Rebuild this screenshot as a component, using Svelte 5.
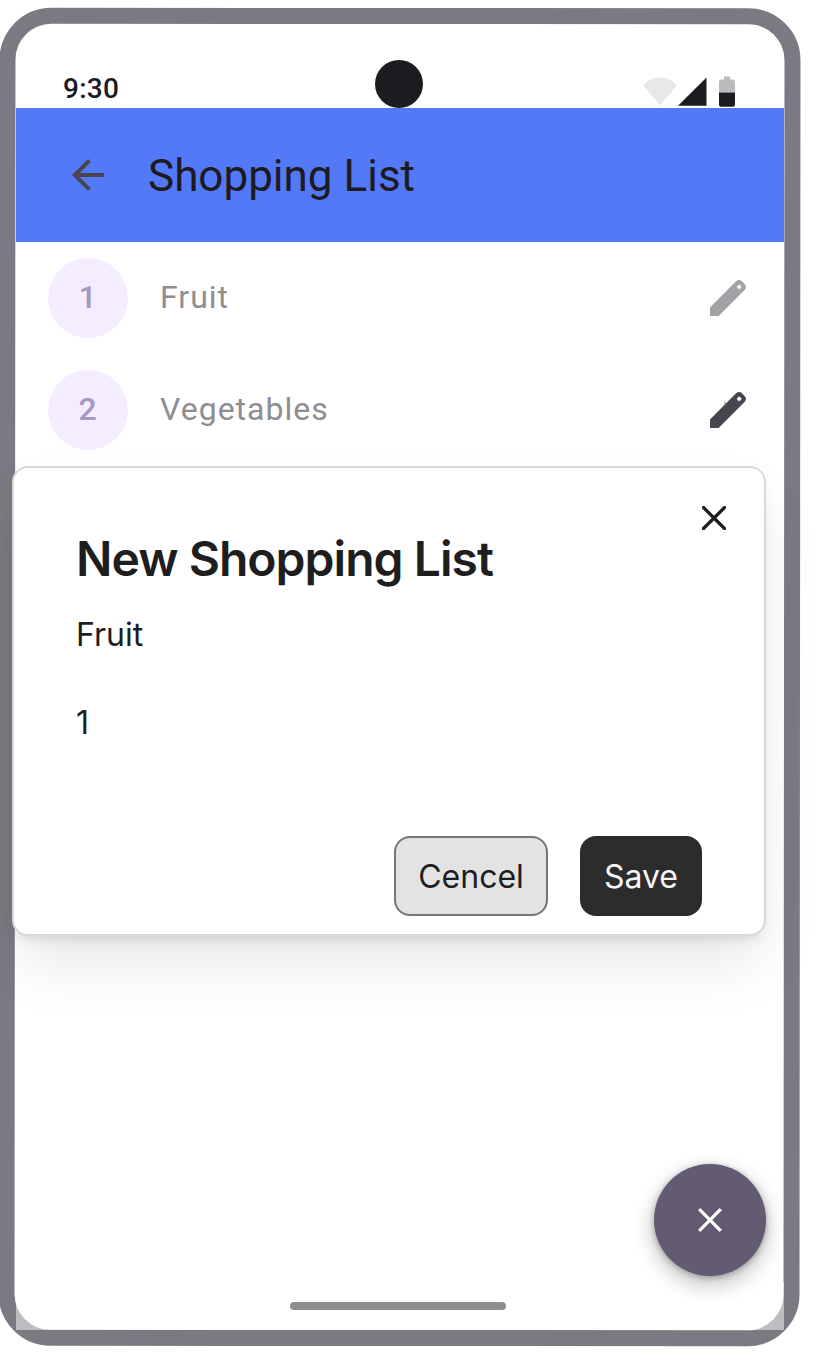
<script>
  const items = [
    { n: 1, label: 'Fruit', active: false },
    { n: 2, label: 'Vegetables', active: true }
  ];
</script>

<div class="phone">
  <div class="bezel"></div>
  <div class="screen">
    <header class="status">
      <span class="time">9:30</span>
      <span class="camera"></span>
      <svg class="signals" width="94" height="32" viewBox="0 0 94 32">
        <path d="M17 29.5 0.3 9.2Q7 1.5 17 1.5T34 9.2Z" fill="#e8e8e8" />
        <path d="M35 29.8 63.5 1.5V29.8Z" fill="#1d1b20" />
        <path d="M76 16.5V6Q76 3.5 78.5 3.5H81V.5H87V3.5H90Q92 3.5 92 6V16.5Z" fill="#bbbabc" />
        <path d="M76 16.5H92V28.5Q92 30.7 90 30.7H78Q76 30.7 76 28.5Z" fill="#1d1b20" />
      </svg>
    </header>

    <nav class="appbar">
      <svg width="32" height="32" viewBox="0 0 32 32">
        <path d="M32 14v4H7.65l11.2 11.2L16 32 0 16 16 0l2.85 2.8L7.65 14Z" fill="#49454f" />
      </svg>
      <h1>Shopping List</h1>
    </nav>

    <ul>
      {#each items as item}
        <li>
          <span class="avatar">{item.n}</span>
          <span class="label">{item.label}</span>
          <svg class:faded={!item.active} width="48" height="48" viewBox="0 0 24 24">
            <path fill="#49454f" fill-rule="evenodd" d="M3 21V16.7L16.15 3.55Q17.5 2.45 18.85 3.55L20.4 5.1Q21.6 6.45 20.4 7.85L7.3 21ZM17.6 5.2 16.9 5.7 16.4 6.4 16.9 7.1 17.6 7.6 18.3 7.1 18.8 6.4 18.3 5.7Z" />
            {#if item.active}
              <path d="M10.2 7.4 11.1 8.6 10.2 9.6Z" fill="#a19fa5" />
            {/if}
          </svg>
        </li>
      {/each}
    </ul>

    <section class="dialog">
      <svg class="close" width="24" height="24" viewBox="0 0 24 24">
        <path d="M1.5 1.5 22.5 22.5M22.5 1.5 1.5 22.5" stroke="#1e1e1e" stroke-width="3.2" stroke-linecap="round" />
      </svg>
      <h2>New Shopping List</h2>
      <p>Fruit</p>
      <p class="amount">1</p>
      <div class="actions">
        <button class="cancel">Cencel</button>
        <button class="save">Save</button>
      </div>
    </section>

    <button class="fab" aria-label="Close">
      <svg width="24" height="24" viewBox="0 0 24 24">
        <path d="M1.2 1.2 22.8 22.8M22.8 1.2 1.2 22.8" stroke="#fff" stroke-width="3.2" />
      </svg>
    </button>

    <footer><span></span></footer>
  </div>
</div>

<style>
  :global(body) { margin: 0; background: #fff; }
  * { box-sizing: border-box; }
  .phone {
    position: relative;
    width: 820px;
    height: 1368px;
    padding: 24px 36px 38px 16px;
    overflow: hidden;
    background: #fff;
    font-family: Roboto, sans-serif;
  }
  .bezel {
    position: absolute;
    left: -1px;
    top: 8.4px;
    width: 801px;
    height: 1338px;
    border: 16px solid #7d7983;
    border-radius: 52px;
    transform: rotate(0.045deg);
  }
  .screen {
    position: relative;
    display: flex;
    flex-direction: column;
    height: 1306px;
  }
  .status {
    display: grid;
    grid-template-columns: 1fr 48px 1fr;
    align-items: end;
    height: 84px;
    flex: none;
    padding: 0 47px;
  }
  .time {
    font-size: 28px;
    line-height: 38px;
    font-weight: 500;
    letter-spacing: 0.28px;
    color: #1d1b20;
  }
  .camera {
    width: 48px;
    height: 48px;
    border-radius: 50%;
    background: #1d1b20;
    margin-left: -1px;
  }
  .signals { justify-self: end; }
  .appbar {
    height: 134px;
    flex: none;
    display: flex;
    align-items: center;
    gap: 44px;
    padding-left: 56px;
    background: #5378f8;
  }
  h1 {
    margin: 0;
    padding-top: 2px;
    font-size: 44px;
    line-height: 56px;
    font-weight: 400;
    color: #1d1b20;
  }
  ul { margin: 0; padding: 0; list-style: none; }
  li {
    height: 112px;
    display: flex;
    align-items: center;
    gap: 32px;
    padding: 0 32px;
  }
  .avatar {
    width: 80px;
    height: 80px;
    border-radius: 50%;
    background: #f4edff;
    color: #a498c5;
    font-size: 32px;
    font-weight: 500;
    line-height: 79px;
    text-align: center;
    padding-right: 1px;
  }
  .label {
    flex: 1;
    padding-bottom: 2px;
    font-size: 32px;
    line-height: 48px;
    letter-spacing: 1px;
    color: #8e8d8f;
  }
  .faded { opacity: 0.5; }
  .dialog {
    flex: none;
    position: relative;
    width: 754px;
    height: 470px;
    margin-left: -4px;
    padding: 62px 62px 18px;
    display: flex;
    flex-direction: column;
    border: 2px solid #d9d9d9;
    border-radius: 16px;
    background: #fff;
    box-shadow: 0 8px 8px -8px rgba(12, 12, 13, 0.1), 0 32px 64px -8px rgba(12, 12, 13, 0.1), 0 8px 16px -4px rgba(12, 12, 13, 0.07);
    font-family: Inter, sans-serif;
    color: #1e1e1e;
  }
  .close { position: absolute; right: 38px; top: 38px; }
  h2 {
    margin: 0;
    font-size: 48px;
    line-height: 58px;
    font-weight: 600;
    letter-spacing: -0.96px;
  }
  p { margin: 25px 0 0; font-size: 32px; line-height: 44px; }
  .amount { margin-top: 44px; }
  .actions {
    display: flex;
    justify-content: flex-end;
    gap: 32px;
    margin-top: auto;
  }
  .actions button {
    height: 80px;
    border-radius: 16px;
    padding: 2px 0 0;
    font: 400 32px/32px Inter, sans-serif;
  }
  .actions .cancel { width: 154px; border: 2px solid #767676; background: #e3e3e3; color: #1e1e1e; }
  .actions .save { width: 122px; border: 2px solid #2c2c2c; background: #2c2c2c; color: #f5f5f5; }
  .fab {
    z-index: 1;
    width: 112px;
    height: 112px;
    flex: none;
    align-self: flex-end;
    margin: auto 18px 6px 0;
    padding: 0;
    border: 0;
    border-radius: 50%;
    background: #625b71;
    display: grid;
    place-items: center;
    box-shadow: 0 2px 6px rgba(0, 0, 0, 0.3), 0 8px 16px 6px rgba(0, 0, 0, 0.15);
  }
  footer {
    height: 48px;
    flex: none;
    padding-top: 20px;
    background: rgba(255, 255, 255, 0.5);
  }
  footer span {
    display: block;
    width: 216px;
    height: 8px;
    margin-left: 274px;
    border-radius: 4px;
    background: #8e8d8f;
  }
</style>
